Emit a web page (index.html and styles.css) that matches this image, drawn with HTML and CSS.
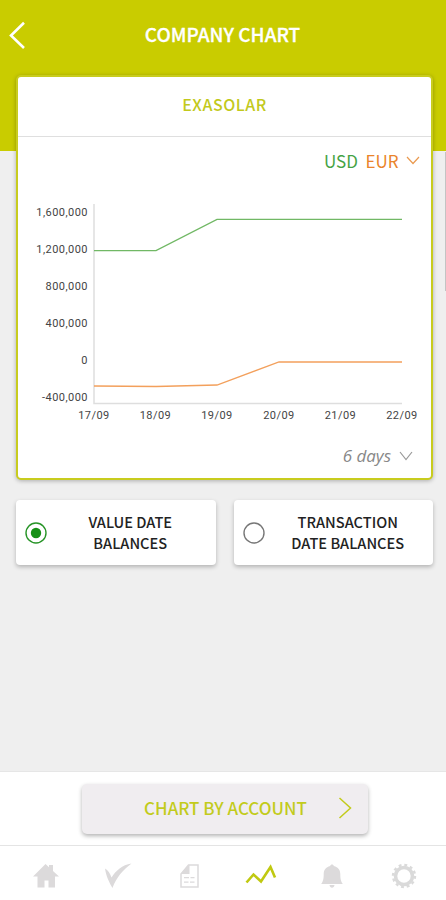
FILE: index.html
```html
<!DOCTYPE html>
<html lang="en">
<head>
<meta charset="utf-8">
<title>Company Chart</title>
<link rel="stylesheet" href="styles.css">
</head>
<body>
<div class="app">
  <header class="header">
    <svg class="back" width="16" height="28" viewBox="0 0 16 28"><path d="M15 1.800 2 14.500l13 12.500"/></svg>
    <h1 class="title"><span>COMPANY CHART</span></h1>
  </header>
  <main class="content">
    <section class="card">
      <h2 class="company"><span>EXASOLAR</span></h2>
      <div class="currencies">
        <span class="usd">USD</span>
        <span class="eur">EUR</span>
        <svg class="chev chev-eur" width="14" height="9" viewBox="0 0 14 9"><path d="M1 1l6 6.500L13 1"/></svg>
      </div>
      <svg class="chart" width="412" height="245" viewBox="18 185 412 245">
        <path class="axis" d="M94 204V403.500H402"/>
        <path class="line-usd" d="M94 250.700H156L217 219.300H402"/>
        <path class="line-eur" d="M94 386L156 386.500L217 385L279 362H402"/>
        <g class="ylab">
          <text x="88" y="216">1,600,000</text>
          <text x="88" y="253">1,200,000</text>
          <text x="88" y="290">800,000</text>
          <text x="88" y="327">400,000</text>
          <text x="88" y="364">0</text>
          <text x="88" y="401">-400,000</text>
        </g>
        <g class="xlab">
          <text x="94" y="418.500">17/09</text>
          <text x="155.500" y="418.500">18/09</text>
          <text x="217" y="418.500">19/09</text>
          <text x="279" y="418.500">20/09</text>
          <text x="340.500" y="418.500">21/09</text>
          <text x="402" y="418.500">22/09</text>
        </g>
      </svg>
      <div class="period">
        <span>6 days</span>
        <svg class="chev chev-days" width="14" height="10" viewBox="0 0 14 10"><path d="M1 1l6 7.500L13 1"/></svg>
      </div>
    </section>
    <div class="options">
      <div class="option">
        <svg class="radio on" width="22" height="22" viewBox="0 0 22 22"><circle class="ring" cx="11" cy="11" r="10"/><circle class="dot" cx="11" cy="11" r="5.200"/></svg>
        <span class="option-label">VALUE DATE<br>BALANCES</span>
      </div>
      <div class="option">
        <svg class="radio" width="22" height="22" viewBox="0 0 22 22"><circle class="ring" cx="11" cy="11" r="10"/></svg>
        <span class="option-label">TRANSACTION<br>DATE BALANCES</span>
      </div>
    </div>
    <div class="scrollbar"></div>
  </main>
  <div class="action">
    <div class="button">
      <span class="button-label">CHART BY ACCOUNT</span>
      <svg class="next" width="14" height="22" viewBox="0 0 14 22"><path d="M1.500 1 12.500 11 1.500 21"/></svg>
    </div>
  </div>
  <nav class="tabs">
    <svg class="tab" width="32" height="32" viewBox="0 0 32 32"><path d="M3 16.500 15.500 4l3.500 3.300V5h4v6l6 5.500h-4V27.500h-6.500V20.500h-4v7H7.500V16.500z"/></svg>
    <svg class="tab" width="32" height="32" viewBox="0 0 32 32"><path d="M3 8.500c3 1.500 5 4.500 6.500 9C14 10.500 20 5 29.500 3.500 21 10 14.500 17 10.500 28 7.500 23 4 16 3 8.500z"/></svg>
    <svg class="tab" width="32" height="32" viewBox="0 0 32 32"><path class="stroke" d="M15.500 5H25v22H8V14z"/><path d="M16.500 4.500V14H7.500zM11 17h5v1.300h-5zM17.500 17h4v1.300h-4zM11 21.500h4.500v1.300H11zM17 21.500h4.500v1.300H17z"/></svg>
    <svg class="tab" width="32" height="32" viewBox="0 0 32 32"><path class="trend" d="M1.500 22.500 8.500 14.500l7.500 7L25.500 7l4.500 10.500"/></svg>
    <svg class="tab" width="32" height="32" viewBox="0 0 32 32"><path d="M16 4.500c1 0 1.600.600 1.800 1.400 4.500 1 6.500 4.100 6.500 8.100 0 5 .500 7 2.500 10H5.200C7.200 21 7.700 19 7.700 14c0-4 2-7.100 6.500-8.100.200-.800.800-1.400 1.800-1.400zM13.500 25h5c-.3 1.700-1.200 2.800-2.500 2.800s-2.200-1.100-2.500-2.800z"/></svg>
    <svg class="tab" width="32" height="32" viewBox="0 0 32 32"><circle class="gear-ring" cx="16" cy="16" r="8.500"/><circle class="gear-teeth" cx="16" cy="16" r="11"/></svg>
  </nav>
</div>
</body>
</html>
```
FILE: styles.css
```css
* { box-sizing: border-box; }
body {
  margin: 0;
  font-family: "Noto Sans CJK JP", "Noto Sans", sans-serif;
  background: #efefef;
}
svg { display: block; fill: none; flex: none; }
h1, h2 { margin: 0; }
.app {
  width: 446px;
  height: 900px;
  display: flex;
  flex-direction: column;
  overflow: hidden;
}
.header {
  height: 151px;
  flex: none;
  background: #c9cc00;
  display: flex;
  align-items: flex-start;
  padding: 20px 9px 0;
}
.back { stroke: #fff; stroke-width: 2.6; margin-top: 1px; }
.title {
  flex: 1;
  margin: 0 18px 0 1px;
  text-align: center;
  color: #fff;
  font-size: 19px;
  font-weight: 500;
  line-height: 28px;
  -webkit-text-stroke: .3px #fff;
}
.content { flex: 1; padding: 0 13px 0 16px; margin-top: -76px; position: relative; }
.scrollbar {
  position: absolute;
  top: 77px;
  right: 0;
  width: 1px;
  height: 139px;
  background: #c4c4c4;
}
.card {
  height: 405px;
  border: 2.500px solid #c8cc1e;
  border-radius: 5px;
  background: #fff;
  box-shadow: 0 1px 4px rgba(0,0,0,.28);
  display: flex;
  flex-direction: column;
}
.company {
  height: 60px;
  flex: none;
  border-bottom: 1px solid #dfdfdf;
  text-align: center;
  color: #c2c91c;
  font-size: 16px;
  font-weight: 500;
  line-height: 54px;
  letter-spacing: .55px;
}
.currencies {
  height: 46px;
  margin-bottom: 2px;
  flex: none;
  display: flex;
  justify-content: flex-end;
  align-items: center;
  gap: 7.500px;
  padding-right: 11px;
  font-size: 17px;
}
.usd { color: #45a345; }
.eur { color: #ea842b; }
.chev { stroke-width: 1.2; }
.chev-eur { stroke: #ea9a50; }
.chev-days { stroke: #999; }
.chart { overflow: visible; }
.axis { stroke: #dedede; stroke-width: 1.5; }
.line-usd { stroke: #71b865; stroke-width: 1.3; }
.line-eur { stroke: #f3a05c; stroke-width: 1.3; }
.ylab, .xlab { font-family: Roboto, sans-serif; font-size: 11px; letter-spacing: .45px; fill: #444; }
.ylab { text-anchor: end; }
.xlab { text-anchor: middle; }
.period {
  display: flex;
  justify-content: flex-end;
  align-items: center;
  gap: 8px;
  padding-right: 18px;
  margin-top: 3px;
  height: 48px;
  color: #888;
  font-family: "Open Sans", sans-serif;
  font-size: 17px;
  font-style: italic;
}
.options { display: flex; gap: 18px; margin-top: 20px; }
.option {
  flex: 1;
  height: 65px;
  background: #fff;
  border-radius: 4px;
  box-shadow: 0 2px 4px rgba(0,0,0,.25);
  display: flex;
  align-items: center;
  padding: 0 2px 0 9px;
}
.ring { stroke: #777; stroke-width: 1.4; }
.on .ring { stroke: #279427; }
.dot { fill: #169016; }
.option-label {
  flex: 1;
  text-align: center;
  color: #222;
  font-size: 14.6px;
  font-weight: 500;
  line-height: 20.500px;
}
.action {
  height: 75px;
  flex: none;
  background: #fff;
  border-top: 1px solid #e6e6e6;
  border-bottom: 1.500px solid #e4e4e4;
  padding: 12px 0 0 82px;
}
.button {
  width: 286px;
  height: 50px;
  background: #f0edf0;
  border-radius: 5px;
  box-shadow: 0 2px 4px rgba(0,0,0,.3);
  display: flex;
  align-items: center;
  padding: 0 16px 2px 0;
}
.button-label {
  flex: 1;
  padding-left: 31px;
  padding-bottom: 1px;
  text-align: center;
  color: #c2cb1c;
  font-size: 17px;
  font-weight: 500;
}
.next { stroke: #c2cb1c; stroke-width: 1.5; }
.tabs {
  height: 54px;
  flex: none;
  background: #fff;
  display: flex;
  justify-content: space-between;
  align-items: center;
  padding: 6px 26px 0 30px;
}
.tab { fill: #dcdadb; }
.stroke { stroke: #dcdadb; stroke-width: 1.5; fill: none; }
.trend { stroke: #c0c911; stroke-width: 2.6; fill: none; }
.gear-ring { stroke: #dadada; stroke-width: 3.6; fill: none; }
.gear-teeth { stroke: #dadada; stroke-width: 2.4; stroke-dasharray: 2.88 2.88; fill: none; }
```
